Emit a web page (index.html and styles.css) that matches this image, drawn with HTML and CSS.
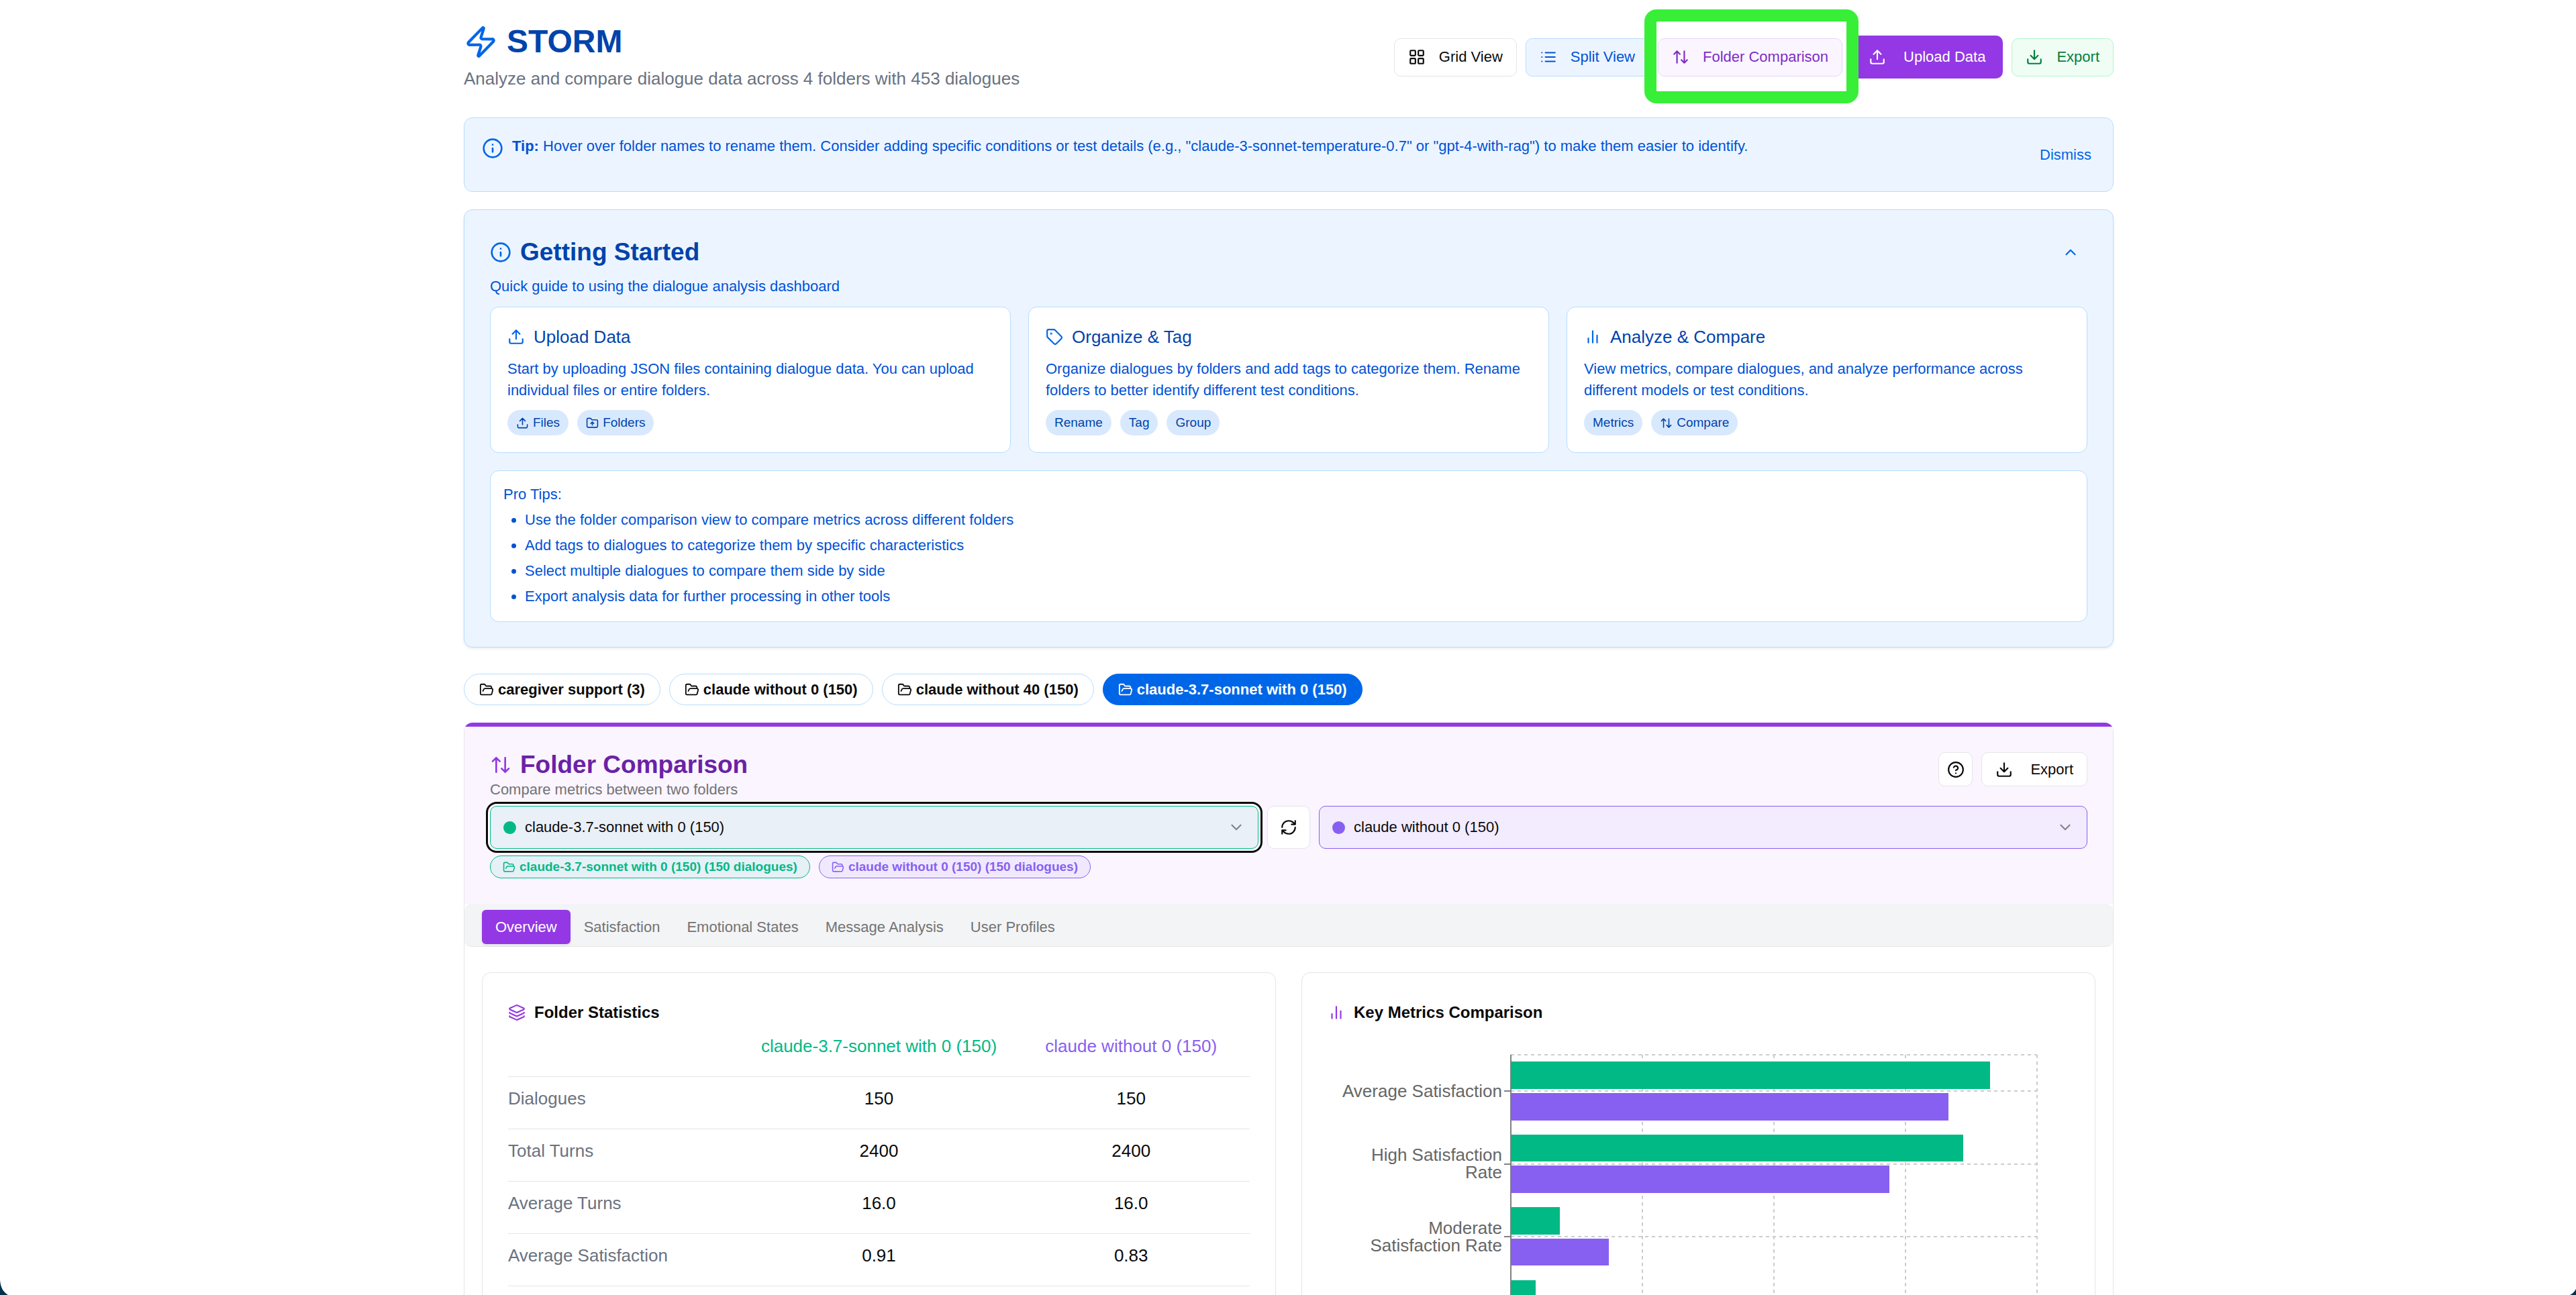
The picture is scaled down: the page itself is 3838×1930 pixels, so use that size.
FILE: index.html
```html
<!DOCTYPE html>
<html lang="en">
<head>
<meta charset="utf-8">
<meta name="viewport" content="width=device-width, initial-scale=1">
<title>STORM</title>
<link rel="stylesheet" href="styles.css">
</head>
<body>
<svg class="sprite" aria-hidden="true">
  <symbol id="zap" viewBox="0 0 24 24"><path d="M4 14a1 1 0 0 1-.78-1.63l9.9-10.2a.5.5 0 0 1 .86.46l-1.92 6.02A1 1 0 0 0 13 10h7a1 1 0 0 1 .78 1.63l-9.9 10.2a.5.5 0 0 1-.86-.46l1.92-6.02A1 1 0 0 0 11 14z"/></symbol>
  <symbol id="grid" viewBox="0 0 24 24"><rect width="7" height="7" x="3" y="3" rx="1"/><rect width="7" height="7" x="14" y="3" rx="1"/><rect width="7" height="7" x="14" y="14" rx="1"/><rect width="7" height="7" x="3" y="14" rx="1"/></symbol>
  <symbol id="list" viewBox="0 0 24 24"><path d="M3 12h.01M3 18h.01M3 6h.01M8 12h13M8 18h13M8 6h13"/></symbol>
  <symbol id="updown" viewBox="0 0 24 24"><path d="m21 16-4 4-4-4M17 20V4M3 8l4-4 4 4M7 4v16"/></symbol>
  <symbol id="upload" viewBox="0 0 24 24"><path d="M21 15v4a2 2 0 0 1-2 2H5a2 2 0 0 1-2-2v-4M17 8l-5-5-5 5M12 3v12"/></symbol>
  <symbol id="download" viewBox="0 0 24 24"><path d="M21 15v4a2 2 0 0 1-2 2H5a2 2 0 0 1-2-2v-4M7 10l5 5 5-5M12 15V3"/></symbol>
  <symbol id="info" viewBox="0 0 24 24"><circle cx="12" cy="12" r="10"/><path d="M12 16v-4M12 8h.01"/></symbol>
  <symbol id="help" viewBox="0 0 24 24"><circle cx="12" cy="12" r="10"/><path d="M9.09 9a3 3 0 0 1 5.83 1c0 2-3 3-3 3M12 17h.01"/></symbol>
  <symbol id="tag" viewBox="0 0 24 24"><path d="M12.586 2.586A2 2 0 0 0 11.172 2H4a2 2 0 0 0-2 2v7.172a2 2 0 0 0 .586 1.414l8.704 8.704a2.426 2.426 0 0 0 3.42 0l6.58-6.58a2.426 2.426 0 0 0 0-3.42z"/><circle cx="7.5" cy="7.5" r=".5" fill="currentColor"/></symbol>
  <symbol id="bars" viewBox="0 0 24 24"><path d="M18 20V10M12 20V4M6 20v-6"/></symbol>
  <symbol id="folder-up" viewBox="0 0 24 24"><path d="M20 20a2 2 0 0 0 2-2V8a2 2 0 0 0-2-2h-7.9a2 2 0 0 1-1.69-.9L9.6 3.9A2 2 0 0 0 7.93 3H4a2 2 0 0 0-2 2v13a2 2 0 0 0 2 2ZM12 10v6M9 13l3-3 3 3"/></symbol>
  <symbol id="folder" viewBox="0 0 24 24"><path d="m6 14 1.5-2.9A2 2 0 0 1 9.24 10H20a2 2 0 0 1 1.94 2.5l-1.54 6a2 2 0 0 1-1.95 1.5H4a2 2 0 0 1-2-2V5a2 2 0 0 1 2-2h3.9a2 2 0 0 1 1.69.9l.81 1.2a2 2 0 0 0 1.67.9H18a2 2 0 0 1 2 2v2"/></symbol>
  <symbol id="up" viewBox="0 0 24 24"><path d="m18 15-6-6-6 6"/></symbol>
  <symbol id="down" viewBox="0 0 24 24"><path d="m6 9 6 6 6-6"/></symbol>
  <symbol id="refresh" viewBox="0 0 24 24"><path d="M3 12a9 9 0 0 1 9-9 9.75 9.75 0 0 1 6.74 2.74L21 8M21 3v5h-5M21 12a9 9 0 0 1-9 9 9.75 9.75 0 0 1-6.74-2.74L3 16M8 16H3v5"/></symbol>
  <symbol id="layers" viewBox="0 0 24 24"><path d="M12.83 2.18a2 2 0 0 0-1.66 0L2.6 6.08a1 1 0 0 0 0 1.83l8.58 3.91a2 2 0 0 0 1.66 0l8.58-3.9a1 1 0 0 0 0-1.83zM2 12a1 1 0 0 0 .58.91l8.6 3.91a2 2 0 0 0 1.65 0l8.58-3.9A1 1 0 0 0 22 12M2 17a1 1 0 0 0 .58.91l8.6 3.91a2 2 0 0 0 1.65 0l8.58-3.9A1 1 0 0 0 22 17"/></symbol>
</svg>

<main class="app">
  <header class="header">
    <div>
      <h1 class="brand"><svg class="icon icon-xl"><use href="#zap"/></svg>STORM</h1>
      <p class="subtitle">Analyze and compare dialogue data across 4 folders with 453 dialogues</p>
    </div>
    <div class="toolbar">
      <button class="btn"><svg class="icon"><use href="#grid"/></svg>Grid View</button>
      <button class="btn btn-blue"><svg class="icon"><use href="#list"/></svg>Split View</button>
      <div class="callout">
        <button class="btn btn-purple"><svg class="icon"><use href="#updown"/></svg>Folder Comparison</button>
        <span class="callout-frame"></span>
      </div>
      <button class="btn btn-primary"><svg class="icon"><use href="#upload"/></svg>Upload Data</button>
      <button class="btn btn-green"><svg class="icon"><use href="#download"/></svg>Export</button>
    </div>
  </header>

  <section class="tip">
    <svg class="icon icon-lg"><use href="#info"/></svg>
    <p class="tip-text"><strong>Tip:</strong> Hover over folder names to rename them. Consider adding specific conditions or test details (e.g., "claude-3-sonnet-temperature-0.7" or "gpt-4-with-rag") to make them easier to identify.</p>
    <button class="dismiss">Dismiss</button>
  </section>

  <section class="guide">
    <div class="guide-head">
      <h2 class="heading"><svg class="icon icon-lg"><use href="#info"/></svg>Getting Started</h2>
      <button class="collapse" aria-label="Collapse guide"><svg class="icon"><use href="#up"/></svg></button>
    </div>
    <p class="guide-sub">Quick guide to using the dialogue analysis dashboard</p>
    <div class="steps">
      <article class="step">
        <h3 class="step-title"><svg class="icon"><use href="#upload"/></svg>Upload Data</h3>
        <p class="step-text">Start by uploading JSON files containing dialogue data. You can upload individual files or entire folders.</p>
        <div class="chips">
          <span class="chip"><svg class="icon icon-xs"><use href="#upload"/></svg>Files</span>
          <span class="chip"><svg class="icon icon-xs"><use href="#folder-up"/></svg>Folders</span>
        </div>
      </article>
      <article class="step">
        <h3 class="step-title"><svg class="icon"><use href="#tag"/></svg>Organize &amp; Tag</h3>
        <p class="step-text">Organize dialogues by folders and add tags to categorize them. Rename folders to better identify different test conditions.</p>
        <div class="chips">
          <span class="chip">Rename</span>
          <span class="chip">Tag</span>
          <span class="chip">Group</span>
        </div>
      </article>
      <article class="step">
        <h3 class="step-title"><svg class="icon"><use href="#bars"/></svg>Analyze &amp; Compare</h3>
        <p class="step-text">View metrics, compare dialogues, and analyze performance across different models or test conditions.</p>
        <div class="chips">
          <span class="chip">Metrics</span>
          <span class="chip"><svg class="icon icon-xs"><use href="#updown"/></svg>Compare</span>
        </div>
      </article>
    </div>
    <div class="protips">
      <p>Pro Tips:</p>
      <ul class="protips-list">
        <li>Use the folder comparison view to compare metrics across different folders</li>
        <li>Add tags to dialogues to categorize them by specific characteristics</li>
        <li>Select multiple dialogues to compare them side by side</li>
        <li>Export analysis data for further processing in other tools</li>
      </ul>
    </div>
  </section>

  <nav class="folders">
    <button class="pill"><svg class="icon icon-sm"><use href="#folder"/></svg>caregiver support (3)</button>
    <button class="pill"><svg class="icon icon-sm"><use href="#folder"/></svg>claude without 0 (150)</button>
    <button class="pill"><svg class="icon icon-sm"><use href="#folder"/></svg>claude without 40 (150)</button>
    <button class="pill pill-active"><svg class="icon icon-sm"><use href="#folder"/></svg>claude-3.7-sonnet with 0 (150)</button>
  </nav>

  <section class="compare">
    <div class="compare-head">
      <div class="compare-top">
        <div class="compare-titles">
          <h2 class="heading heading-purple"><svg class="icon icon-lg"><use href="#updown"/></svg>Folder Comparison</h2>
          <p class="compare-sub">Compare metrics between two folders</p>
        </div>
        <div class="compare-actions">
          <button class="btn btn-small btn-square" aria-label="Help"><svg class="icon"><use href="#help"/></svg></button>
          <button class="btn btn-small"><svg class="icon"><use href="#download"/></svg>Export</button>
        </div>
      </div>
      <div class="pickers">
        <div class="picker picker-a">
          <select class="picker-select picker-focused" aria-label="First folder"><option>claude-3.7-sonnet with 0 (150)</option></select>
          <span class="dot"></span>
          <svg class="icon picker-chevron"><use href="#down"/></svg>
        </div>
        <button class="swap" aria-label="Swap folders"><svg class="icon"><use href="#refresh"/></svg></button>
        <div class="picker picker-b">
          <select class="picker-select" aria-label="Second folder"><option>claude without 0 (150)</option></select>
          <span class="dot"></span>
          <svg class="icon picker-chevron"><use href="#down"/></svg>
        </div>
      </div>
      <div class="badges">
        <span class="badge badge-a"><svg class="icon icon-xs"><use href="#folder"/></svg>claude-3.7-sonnet with 0 (150) (150 dialogues)</span>
        <span class="badge badge-b"><svg class="icon icon-xs"><use href="#folder"/></svg>claude without 0 (150) (150 dialogues)</span>
      </div>
    </div>

    <div class="tabs" role="tablist">
      <button class="tab tab-active" role="tab" aria-selected="true">Overview</button>
      <button class="tab" role="tab">Satisfaction</button>
      <button class="tab" role="tab">Emotional States</button>
      <button class="tab" role="tab">Message Analysis</button>
      <button class="tab" role="tab">User Profiles</button>
    </div>

    <div class="panels">
      <article class="panel">
        <h3 class="panel-title"><svg class="icon"><use href="#layers"/></svg>Folder Statistics</h3>
        <table class="stats">
          <thead>
            <tr><th class="stats-label"></th><th class="text-a">claude-3.7-sonnet with 0 (150)</th><th class="text-b">claude without 0 (150)</th></tr>
          </thead>
          <tbody>
            <tr><td class="stats-label">Dialogues</td><td>150</td><td>150</td></tr>
            <tr><td class="stats-label">Total Turns</td><td>2400</td><td>2400</td></tr>
            <tr><td class="stats-label">Average Turns</td><td>16.0</td><td>16.0</td></tr>
            <tr><td class="stats-label">Average Satisfaction</td><td>0.91</td><td>0.83</td></tr>
          </tbody>
        </table>
      </article>
      <article class="panel">
        <h3 class="panel-title"><svg class="icon"><use href="#bars"/></svg>Key Metrics Comparison</h3>
        <svg class="chart" viewBox="0 0 1105 440" role="img" aria-label="Key metrics of both folders">
          <g class="chart-grid">
            <path d="M273 42H1057M273 96H1057M273 205H1057M273 313H1057"/>
            <path d="M469 42V440M665 42V440M861 42V440M1057 42V440"/>
          </g>
          <path class="chart-axis" d="M273 42V440M263 96h10M263 205h10M263 313h10"/>
          <g class="bar-a">
            <rect x="273" y="52" width="714" height="41"/>
            <rect x="273" y="161" width="674" height="40"/>
            <rect x="273" y="269" width="73" height="41"/>
            <rect x="273" y="378" width="37" height="40"/>
          </g>
          <g class="bar-b">
            <rect x="273" y="99" width="652" height="41"/>
            <rect x="273" y="207" width="564" height="41"/>
            <rect x="273" y="316" width="146" height="40"/>
          </g>
          <g class="chart-label">
            <text x="260" y="105">Average Satisfaction</text>
            <text x="260" y="200">High Satisfaction</text>
            <text x="260" y="226">Rate</text>
            <text x="260" y="309">Moderate</text>
            <text x="260" y="335">Satisfaction Rate</text>
          </g>
        </svg>
      </article>
    </div>
  </section>
</main>
<svg class="corner corner-left" viewBox="0 0 12 22" aria-hidden="true"><path d="M0 0C1 10 4 17 12 22H0Z"/></svg>
<svg class="corner corner-right" viewBox="0 0 9 9" aria-hidden="true"><path d="M9 0C7 4 4 7 0 9H9Z"/></svg>
</body>
</html>
```
FILE: styles.css
```css
:root {
  --ink: #0a0a0a;
  --blue-50: #ecf5ff;
  --blue-100: #d8e9fe;
  --blue-200: #b8dcfd;
  --blue-600: #0066e8;
  --blue-700: #0052d6;
  --blue-800: #0043ab;
  --purple-50: #faf5ff;
  --purple-600: #9338e4;
  --green: #00b985;
  --violet: #8760f2;
  --line: #e5e5e5;
  --slate: #6a7280;
  --gray: #737373;
}

* {
  box-sizing: border-box;
}

body,
h1,
h2,
h3,
p,
ul {
  margin: 0;
  padding: 0;
}

body {
  position: relative;
  height: 100vh;
  overflow: hidden;
  background: #fff;
  color: var(--ink);
  font: 22px/32px "Liberation Sans", Arial, sans-serif;
}

button,
select {
  margin: 0;
  font: inherit;
  color: inherit;
}

.sprite {
  display: none;
}

.icon {
  flex: none;
  width: 26px;
  height: 26px;
  fill: none;
  stroke: currentColor;
  stroke-width: 2;
  stroke-linecap: round;
  stroke-linejoin: round;
}

.icon-xs {
  width: 19px;
  height: 19px;
}

.icon-sm {
  width: 22px;
  height: 22px;
}

.icon-lg {
  width: 32px;
  height: 32px;
}

.icon-xl {
  width: 51px;
  height: 51px;
}

.app {
  max-width: 2560px;
  margin: 0 auto;
  padding: 32px 50px 32px 52px;
}

/* Header */

.header {
  display: flex;
  align-items: center;
  justify-content: space-between;
  margin-bottom: 37px;
}

.brand {
  display: flex;
  align-items: center;
  gap: 13px;
  font-size: 48px;
  line-height: 60px;
  color: var(--blue-800);
}

.brand .icon {
  color: var(--blue-600);
}

.subtitle {
  margin-top: 4px;
  font-size: 26px;
  line-height: 42px;
  color: var(--slate);
}

.toolbar {
  display: flex;
  align-items: center;
  gap: 13px;
}

.btn {
  display: flex;
  align-items: center;
  justify-content: center;
  gap: 20px;
  height: 57px;
  padding: 0 20px;
  border: 1px solid var(--line);
  border-radius: 10px;
  background: #fff;
  white-space: nowrap;
}

.btn-blue {
  border-color: var(--blue-200);
  background: var(--blue-50);
  color: var(--blue-700);
}

.btn-purple {
  border-color: #e8d5fe;
  background: var(--purple-50);
  color: #7e2dc6;
}

.btn-green {
  border-color: #b4f5ce;
  background: #effdf4;
  color: #008040;
}

.btn-primary {
  gap: 26px;
  height: 64px;
  padding: 0 26px;
  border: 0;
  background: var(--purple-600);
  color: #fff;
}

.btn-small {
  gap: 26px;
  height: 51px;
}

.btn-square {
  width: 51px;
  padding: 0;
}

.callout {
  position: relative;
}

.callout-frame {
  position: absolute;
  inset: -43px -24px -40px -20px;
  border: 18px solid #38ef38;
  border-radius: 18px;
  pointer-events: none;
}

/* Tip */

.tip {
  display: flex;
  align-items: flex-start;
  gap: 13px;
  padding: 26px;
  border: 1px solid var(--blue-200);
  border-radius: 13px;
  background: var(--blue-50);
  color: var(--blue-700);
}

.tip .icon {
  margin-top: 3px;
  color: var(--blue-600);
}

.tip-text {
  flex: 1;
}

.dismiss {
  height: 57px;
  padding: 0 6px;
  border: 0;
  background: none;
  color: var(--blue-600);
}

/* Guide */

.guide {
  margin-top: 26px;
  padding: 37px 38px;
  border: 1px solid var(--blue-200);
  border-radius: 13px;
  background: var(--blue-50);
  box-shadow: 0 2px 4px rgb(0 0 0 / 8%);
  color: var(--blue-700);
}

.guide-head {
  display: flex;
  align-items: center;
  justify-content: space-between;
  height: 52px;
}

.heading {
  display: flex;
  align-items: center;
  gap: 13px;
  font-size: 37px;
  line-height: 38px;
  color: var(--blue-800);
}

.heading .icon {
  color: var(--blue-600);
}

.collapse {
  display: flex;
  align-items: center;
  justify-content: center;
  width: 51px;
  height: 51px;
  border: 0;
  background: none;
  color: var(--blue-600);
}

.guide-sub {
  margin-top: 9px;
}

.steps {
  display: grid;
  grid-template-columns: repeat(3, 1fr);
  gap: 26px;
  margin-top: 14px;
}

.step {
  padding: 25px;
  border: 1px solid var(--blue-200);
  border-radius: 13px;
  background: #fff;
}

.step-title {
  display: flex;
  align-items: center;
  gap: 13px;
  margin-bottom: 13px;
  font-size: 26px;
  font-weight: 400;
  line-height: 38px;
  color: var(--blue-800);
}

.step-title .icon {
  color: var(--blue-600);
}

.chips {
  display: flex;
  gap: 13px;
  margin-top: 13px;
}

.chip {
  display: flex;
  align-items: center;
  gap: 6px;
  height: 38px;
  padding: 0 13px;
  border-radius: 19px;
  background: var(--blue-100);
  font-size: 19px;
  color: var(--blue-800);
}

.protips {
  margin-top: 26px;
  padding: 19px 19px 21px;
  border: 1px solid var(--blue-200);
  border-radius: 13px;
  background: #fff;
}

.protips-list {
  display: grid;
  gap: 6px;
  margin-top: 6px;
  padding-left: 32px;
}

/* Folder pills */

.folders {
  display: flex;
  flex-wrap: wrap;
  gap: 13px;
  margin-top: 39px;
}

.pill {
  display: flex;
  align-items: center;
  gap: 6px;
  height: 47px;
  padding: 0 22px;
  border: 1px solid var(--blue-200);
  border-radius: 24px;
  background: #fff;
  font-weight: 700;
}

.pill-active {
  border-color: var(--blue-600);
  background: var(--blue-600);
  color: #fff;
}

/* Comparison card */

.compare {
  margin-top: 26px;
  border: 1px solid var(--line);
  border-top: 6px solid var(--purple-600);
  border-radius: 13px;
}

.compare-head {
  padding: 38px;
  background: var(--purple-50);
}

.compare-top {
  display: flex;
  align-items: flex-start;
  justify-content: space-between;
}

.compare-titles {
  display: grid;
  gap: 2px;
}

.heading-purple {
  color: #6a22a6;
}

.heading-purple .icon {
  color: var(--purple-600);
}

.compare-sub {
  color: var(--gray);
}

.compare-actions {
  display: flex;
  gap: 13px;
}

.pickers {
  display: flex;
  gap: 13px;
  margin-top: 8px;
}

.picker {
  position: relative;
  flex: 1;
}

.picker-select {
  display: block;
  width: 100%;
  height: 64px;
  padding: 0 51px;
  border: 1px solid currentColor;
  border-radius: 10px;
  appearance: none;
}

.picker-select option {
  color: var(--ink);
}

.picker-a .picker-select {
  border-color: var(--green);
  background: #eaf0f7;
}

.picker-b .picker-select {
  border-color: var(--violet);
  background: #f3ebfe;
}

.picker-focused {
  box-shadow: 0 0 0 3px #fff, 0 0 0 6px var(--ink);
}

.dot {
  position: absolute;
  top: 23px;
  left: 20px;
  width: 19px;
  height: 19px;
  border-radius: 50%;
  background: var(--green);
}

.picker-b .dot {
  background: var(--violet);
}

.picker-chevron {
  position: absolute;
  top: 19px;
  right: 20px;
  color: #858388;
}

.swap {
  display: flex;
  align-items: center;
  justify-content: center;
  width: 64px;
  height: 64px;
  border: 1px solid var(--line);
  border-radius: 10px;
  background: #fff;
}

.badges {
  display: flex;
  gap: 13px;
  margin-top: 10px;
}

.badge {
  display: flex;
  align-items: center;
  gap: 6px;
  height: 34px;
  padding: 0 18px;
  border: 1px solid currentColor;
  border-radius: 17px;
  font-size: 19px;
  font-weight: 700;
}

.badge-a {
  background: #e6f0f7;
  color: var(--green);
}

.badge-b {
  background: #f0e9fe;
  color: var(--violet);
}

/* Tabs */

.tabs {
  display: flex;
  padding: 9px 26px 3px;
  border-bottom: 1px solid var(--line);
  border-radius: 10px;
  background: #f3f4f6;
}

.tab {
  height: 51px;
  padding: 0 20px;
  border: 0;
  border-radius: 6px;
  background: none;
  color: var(--gray);
}

.tab-active {
  background: var(--purple-600);
  box-shadow: 0 2px 4px rgb(0 0 0 / 8%);
  color: #fff;
}

/* Panels */

.panels {
  display: grid;
  grid-template-columns: 1fr 1fr;
  gap: 38px;
  padding: 38px 26px;
}

.panel {
  padding: 38px;
  border: 1px solid var(--line);
  border-radius: 13px;
  background: #fff;
}

.panel-title {
  display: flex;
  align-items: center;
  gap: 13px;
  font-size: 24px;
  line-height: 42px;
}

.panel-title .icon {
  color: var(--purple-600);
}

.stats {
  width: 100%;
  border-collapse: collapse;
  table-layout: fixed;
  font-size: 26px;
  line-height: 38px;
  text-align: center;
}

.stats th {
  width: 36%;
  padding: 10px 0 26px;
  border-bottom: 1px solid var(--line);
  font-weight: 400;
}

.stats td {
  padding: 13px 0 26px;
  border-bottom: 1px solid var(--line);
}

.stats .stats-label {
  width: 32%;
  text-align: left;
  color: var(--slate);
}

.stats .text-a {
  color: var(--green);
}

.stats .text-b {
  width: 32%;
  color: var(--violet);
}

.chart {
  display: block;
  width: 100%;
}

.chart-grid {
  fill: none;
  stroke: #ccc;
  stroke-width: 2;
  stroke-dasharray: 5 5;
}

.chart-axis {
  fill: none;
  stroke: #808080;
  stroke-width: 2;
}

.bar-a {
  fill: var(--green);
}

.bar-b {
  fill: var(--violet);
}

.chart-label {
  fill: #666;
  font-size: 26px;
  text-anchor: end;
}

/* Rounded window corners */

.corner {
  position: absolute;
  bottom: 0;
  fill: #04304a;
}

.corner-left {
  left: 0;
  width: 12px;
  height: 22px;
}

.corner-right {
  right: 0;
  width: 9px;
  height: 9px;
}
```
